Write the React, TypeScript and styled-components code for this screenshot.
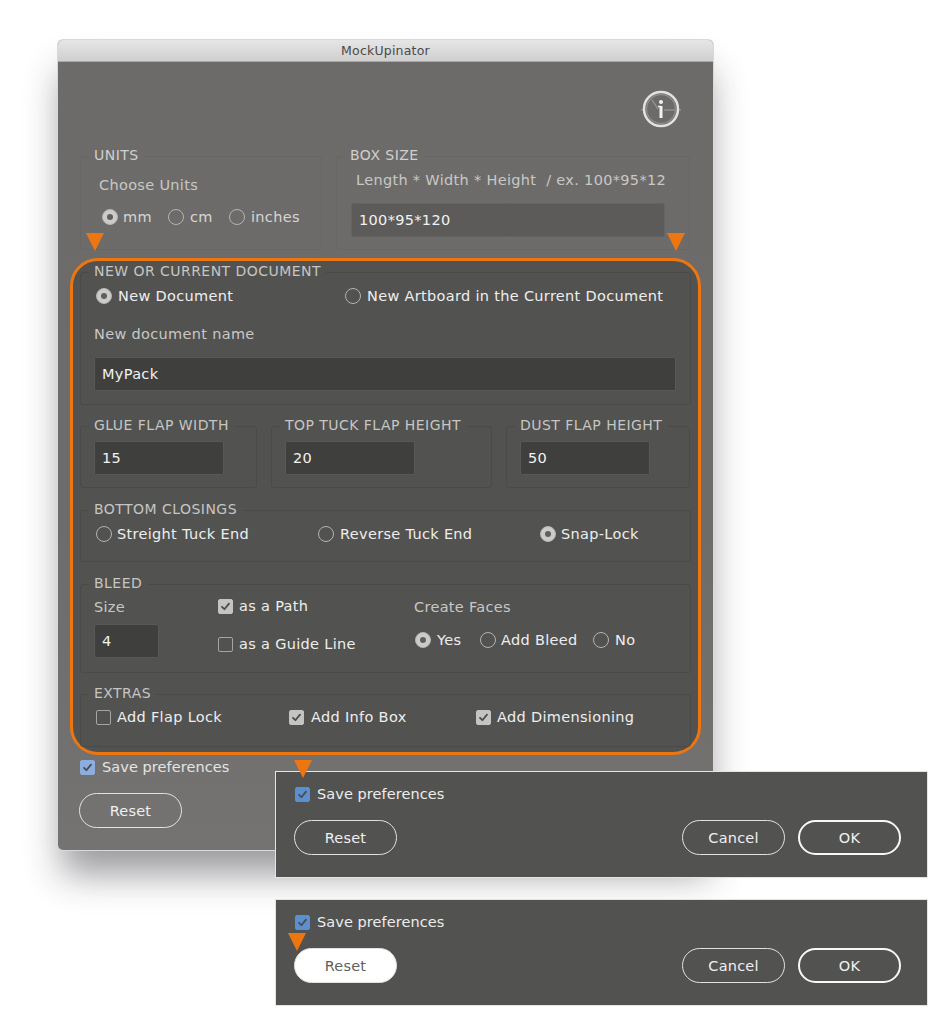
import React from "react";
import styled, { createGlobalStyle } from "styled-components";

const GlobalStyle = createGlobalStyle`
  html, body {
    margin: 0;
    padding: 0;
    background: #ffffff;
  }
  * {
    box-sizing: border-box;
  }
`;

const Page = styled.div`
  position: relative;
  width: 950px;
  height: 1024px;
  padding: 40px 0 0 58px;
  background: #ffffff;
  overflow: hidden;
  font-family: "DejaVu Sans", "Noto Sans", sans-serif;
  font-size: 14.5px;
  letter-spacing: 0.32px;
`;

const Window = styled.div`
  width: 655px;
  height: 810px;
  border-radius: 5px;
  background: linear-gradient(180deg, #6c6b69 0%, #6d6c6a 60%, #747371 100%);
  box-shadow: 0 0 0 1px #d9d9dc, 0 28px 36px -4px rgba(30, 30, 40, 0.45);
  overflow: hidden;
`;

const TitleBar = styled.div`
  height: 22px;
  display: flex;
  align-items: center;
  justify-content: center;
  background: linear-gradient(180deg, #e6e6e6 0%, #cfcfcf 100%);
  border-bottom: 1px solid #a9a9a9;
  color: #4a4a4a;
  font-size: 12.5px;
  letter-spacing: 0.2px;
`;

const WindowBody = styled.div`
  padding: 0 12px;
`;

const InfoRow = styled.div`
  height: 85px;
  display: flex;
  justify-content: flex-end;
  padding: 26px 19px 0 0;
`;

const TopGroups = styled.div`
  display: grid;
  grid-template-columns: 242px 354px;
  gap: 14px;
  margin: 0 11px 8px 10px;
`;

const Group = styled.fieldset<{ $height: number; $faded?: boolean }>`
  margin: 0;
  min-width: 0;
  height: ${(p) => p.$height}px;
  padding: 0 ${(p) => (p.$faded ? 14 : 13)}px;
  border: 1px solid ${(p) => (p.$faded ? "#686765" : "#4a4a48")};
  border-radius: 3px;
  color: ${(p) => (p.$faded ? "#d6d6d4" : "#eeeeee")};
`;

const Legend = styled.legend<{ $faded?: boolean }>`
  margin-left: ${(p) => (p.$faded ? -6 : -5)}px;
  padding: 0 5px;
  line-height: 18px;
  font-size: 14px;
  letter-spacing: 0.46px;
  transform: translateY(-1px);
  color: ${(p) => (p.$faded ? "#d0d0ce" : "#c6c6c4")};
`;

const Highlight = styled.div`
  position: relative;
  width: 631px;
  height: 497px;
  padding: 2px 7px 0;
  border: 3px solid #ee7611;
  border-radius: 28px;
  background: #525250;
  display: flex;
  flex-direction: column;
`;

const Stack = styled.div<{ $top: number }>`
  margin-top: ${(p) => p.$top}px;
`;

const FlapGroups = styled.div`
  display: grid;
  grid-template-columns: 177px 221px 184px;
  gap: 14px;
`;

const Row = styled.div<{ $columns: string; $top: number; $left?: number }>`
  display: grid;
  grid-template-columns: ${(p) => p.$columns};
  align-items: start;
  margin-top: ${(p) => p.$top}px;
  margin-left: ${(p) => p.$left ?? 0}px;
`;

const Choice = styled.label<{ $gap?: number }>`
  display: flex;
  align-items: center;
  gap: ${(p) => p.$gap ?? 6}px;
  height: 18px;
  white-space: nowrap;
`;

const Radio = styled.span<{ $checked?: boolean }>`
  flex: none;
  width: 16px;
  height: 16px;
  border-radius: 50%;
  display: flex;
  align-items: center;
  justify-content: center;
  border: 1px solid #b4b4b2;
  background: ${(p) => (p.$checked ? "#cbcbc9" : "transparent")};

  &::after {
    content: "";
    display: ${(p) => (p.$checked ? "block" : "none")};
    width: 6px;
    height: 6px;
    border-radius: 50%;
    background: #5f5f5d;
  }
`;

const Box = styled.span<{ $tone?: "off" | "on" | "blue" | "paleBlue" }>`
  flex: none;
  width: 15px;
  height: 15px;
  border-radius: 2px;
  display: flex;
  align-items: center;
  justify-content: center;
  border: 1px solid
    ${(p) =>
      p.$tone === "blue"
        ? "#5b8fd0"
        : p.$tone === "paleBlue"
          ? "#8cade0"
          : p.$tone === "on"
            ? "#c4c4c2"
            : "#a5a5a3"};
  background: ${(p) =>
    p.$tone === "blue"
      ? "#5b8fd0"
      : p.$tone === "paleBlue"
        ? "#8cade0"
        : p.$tone === "on"
          ? "#c4c4c2"
          : "transparent"};
`;

const Caption = styled.div<{ $top?: number; $left?: number }>`
  line-height: 18px;
  margin-top: ${(p) => p.$top ?? 0}px;
  margin-left: ${(p) => p.$left ?? 0}px;
  color: #c8c8c6;
  white-space: pre;
`;

const TextField = styled.div<{ $width: number; $faded?: boolean; $top?: number }>`
  width: ${(p) => p.$width}px;
  height: 34px;
  margin-top: ${(p) => p.$top ?? 0}px;
  padding: 0 7px;
  display: flex;
  align-items: center;
  border: 1px solid ${(p) => (p.$faded ? "#656462" : "#585856")};
  border-radius: 2px;
  background: ${(p) => (p.$faded ? "#5c5b5a" : "#3f3f3e")};
  color: #f2f2f2;
`;

const Footer = styled.div`
  display: flex;
  flex-direction: column;
  gap: 17px;
`;

const SaveRow = styled(Choice)<{ $pale?: boolean }>`
  margin-left: 1px;
  gap: 7px;
  letter-spacing: 0.07px;
  color: ${(p) => (p.$pale ? "#e4e4e2" : "#ededed")};
`;

const ButtonRow = styled.div`
  display: flex;
  align-items: center;
`;

const Pill = styled.button<{ $primary?: boolean; $pressed?: boolean }>`
  width: 103px;
  height: 35px;
  padding: 0;
  border-radius: 18px;
  border: ${(p) => (p.$primary ? "2.5px solid #f8f8f8" : "1.5px solid #e2e2e0")};
  background: ${(p) => (p.$pressed ? "#ffffff" : "transparent")};
  color: ${(p) => (p.$pressed ? "#5f5f5d" : "#f0f0f0")};
  font-family: inherit;
  font-size: 14.5px;
  letter-spacing: 0.2px;
`;

const WindowFooter = styled(Footer)`
  margin: 3px 0 0 9px;
`;

const Strip = styled.div<{ $top: number }>`
  position: absolute;
  left: 276px;
  top: ${(p) => p.$top}px;
  width: 651px;
  height: 105px;
  padding: 13px 26px 0 18px;
  background: #525250;
  box-shadow: 0 0 0 1px #e4e4e4;
`;

const StripActions = styled.div`
  margin-left: auto;
  display: flex;
  gap: 13px;
`;

const Marker = styled.div<{ $left: number; $top: number }>`
  position: absolute;
  left: ${(p) => p.$left}px;
  top: ${(p) => p.$top}px;
  width: 0;
  height: 0;
  border-left: 9px solid transparent;
  border-right: 9px solid transparent;
  border-top: 18px solid #ee7611;
`;

const CheckMark = () => (
  <svg width="11" height="11" viewBox="0 0 11 11" fill="none">
    <path d="M2 5.8 L4.4 8.2 L9 2.6" stroke="#4c4c4c" strokeWidth="1.8" strokeLinecap="round" strokeLinejoin="round" />
  </svg>
);

const InfoIcon = () => (
  <svg width="42" height="42" viewBox="0 0 42 42" fill="none">
    <circle cx="21" cy="21" r="14.5" stroke="#8a8a88" strokeWidth="1.5" />
    <path d="M1 22 H5 M37 22 H41" stroke="#a0a09e" strokeWidth="1" />
    <path d="M12 12 L18 21 M24 22 H35" stroke="#8f8f8d" strokeWidth="1.5" />
    <circle cx="21" cy="21" r="17" stroke="#e2e2e0" strokeWidth="2.5" />
    <circle cx="21" cy="14" r="2" fill="#f2f2f2" />
    <path d="M21 18 V30" stroke="#f2f2f2" strokeWidth="3" />
    <path d="M18 18.5 H21" stroke="#f2f2f2" strokeWidth="1.5" />
  </svg>
);

const SavePreferences = ({ pale }: { pale?: boolean }) => (
  <SaveRow $pale={pale}>
    <Box $tone={pale ? "paleBlue" : "blue"}>
      <CheckMark />
    </Box>
    Save preferences
  </SaveRow>
);

const BottomStrip = ({ top, pressed }: { top: number; pressed?: boolean }) => (
  <Strip $top={top}>
    <Footer>
      <SavePreferences />
      <ButtonRow>
        <Pill $pressed={pressed}>Reset</Pill>
        <StripActions>
          <Pill>Cancel</Pill>
          <Pill $primary>OK</Pill>
        </StripActions>
      </ButtonRow>
    </Footer>
  </Strip>
);

const App: React.FC = () => {
  return (
    <>
      <GlobalStyle />
      <Page>
        <Window>
          <TitleBar>MockUpinator</TitleBar>
          <WindowBody>
            <InfoRow>
              <InfoIcon />
            </InfoRow>

            <TopGroups>
              <Group $height={103} $faded>
                <Legend $faded>UNITS</Legend>
                <Caption $top={11} $left={4}>Choose Units</Caption>
                <Row $columns="66px 61px auto" $top={14} $left={7}>
                  <Choice $gap={5}><Radio $checked />mm</Choice>
                  <Choice><Radio />cm</Choice>
                  <Choice><Radio />inches</Choice>
                </Row>
              </Group>
              <Group $height={103} $faded>
                <Legend $faded>BOX SIZE</Legend>
                <Caption $top={6} $left={5}>Length * Width * Height  / ex. 100*95*12</Caption>
                <TextField $width={314} $faded $top={14}>100*95*120</TextField>
              </Group>
            </TopGroups>

            <Highlight>
              <Group $height={142}>
                <Legend>NEW OR CURRENT DOCUMENT</Legend>
                <Row $columns="249px auto" $top={6} $left={2}>
                  <Choice><Radio $checked />New Document</Choice>
                  <Choice><Radio />New Artboard in the Current Document</Choice>
                </Row>
                <Caption $top={20}>New document name</Caption>
                <TextField $width={582} $top={14}>MyPack</TextField>
              </Group>

              <Stack $top={12}>
                <FlapGroups>
                  <Group $height={71}>
                    <Legend>GLUE FLAP WIDTH</Legend>
                    <TextField $width={130} $top={6}>15</TextField>
                  </Group>
                  <Group $height={71}>
                    <Legend>TOP TUCK FLAP HEIGHT</Legend>
                    <TextField $width={130} $top={6}>20</TextField>
                  </Group>
                  <Group $height={71}>
                    <Legend>DUST FLAP HEIGHT</Legend>
                    <TextField $width={130} $top={6}>50</TextField>
                  </Group>
                </FlapGroups>
              </Stack>

              <Stack $top={13}>
                <Group $height={61}>
                  <Legend>BOTTOM CLOSINGS</Legend>
                  <Row $columns="222px 222px auto" $top={6} $left={2}>
                    <Choice $gap={5}><Radio />Streight Tuck End</Choice>
                    <Choice><Radio />Reverse Tuck End</Choice>
                    <Choice $gap={5}><Radio $checked />Snap-Lock</Choice>
                  </Row>
                </Group>
              </Stack>

              <Stack $top={13}>
                <Group $height={98}>
                  <Legend>BLEED</Legend>
                  <Row $columns="124px 196px auto" $top={0}>
                    <div>
                      <Caption $top={5}>Size</Caption>
                      <TextField $width={65} $top={8}>4</TextField>
                    </div>
                    <Stack $top={4}>
                      <Choice><Box $tone="on"><CheckMark /></Box>as a Path</Choice>
                      <Stack $top={20}>
                        <Choice><Box />as a Guide Line</Choice>
                      </Stack>
                    </Stack>
                    <div>
                      <Caption $top={5}>Create Faces</Caption>
                      <Row $columns="65px 113px auto" $top={15} $left={1}>
                        <Choice><Radio $checked />Yes</Choice>
                        <Choice $gap={5}><Radio />Add Bleed</Choice>
                        <Choice><Radio />No</Choice>
                      </Row>
                    </div>
                  </Row>
                </Group>
              </Stack>

              <Stack $top={12}>
                <Group $height={62}>
                  <Legend>EXTRAS</Legend>
                  <Row $columns="193px 187px auto" $top={5} $left={2}>
                    <Choice><Box />Add Flap Lock</Choice>
                    <Choice $gap={7}><Box $tone="on"><CheckMark /></Box>Add Info Box</Choice>
                    <Choice><Box $tone="on"><CheckMark /></Box>Add Dimensioning</Choice>
                  </Row>
                </Group>
              </Stack>
            </Highlight>

            <WindowFooter>
              <SavePreferences pale />
              <ButtonRow>
                <Pill>Reset</Pill>
              </ButtonRow>
            </WindowFooter>
          </WindowBody>
        </Window>

        <BottomStrip top={772} />
        <BottomStrip top={900} pressed />

        <Marker $left={86} $top={233} />
        <Marker $left={667} $top={233} />
        <Marker $left={294} $top={760} />
        <Marker $left={288} $top={933} />
      </Page>
    </>
  );
};

export default App;
